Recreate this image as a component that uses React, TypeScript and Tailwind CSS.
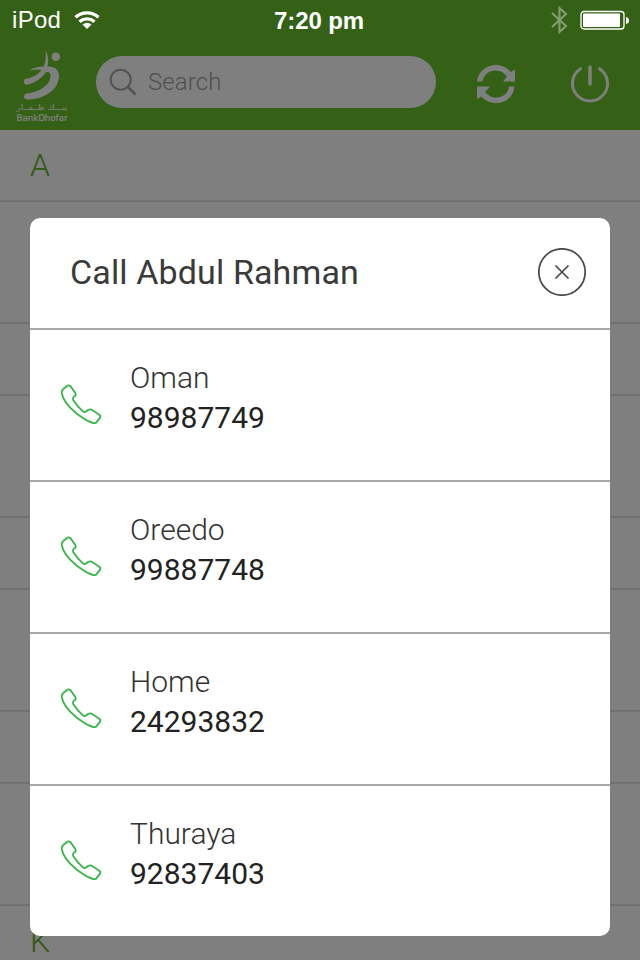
const sections = [{ letter: "A" }, { letter: "B" }, { letter: "F" }, { letter: "H" }, { letter: "K" }];

const numbers = [
  { label: "Oman", phone: "98987749" },
  { label: "Oreedo", phone: "99887748" },
  { label: "Home", phone: "24293832" },
  { label: "Thuraya", phone: "92837403" },
];

function BankLogo() {
  return (
    <svg className="h-[80px] w-[60px]" viewBox="0 0 60 80" fill="#fff">
      <circle cx="43.8" cy="12.8" r="4.2" />
      <path d="M33.5 6C36 11 37 17 35.500 22.500C42.500 22 47 26 47 32C47 43 37 54 17 55.500C10.500 56 11 50 15 49.500C27 48 37.500 42 38.500 33C39 29 37 27.500 34 28C29.500 35 22 39.500 14 41C11.500 39.500 11.500 36.500 13 35C21 34 26.500 30 29.500 26C26 25 22 25.500 17.500 26.500C21 23.500 27 22.500 31.800 22.500C34 17 34 11 33.5 6Z" />
      <text
        x="4.500"
        y="66"
        textLength="51"
        lengthAdjust="spacingAndGlyphs"
        fontSize="8"
        fontFamily="DejaVu Sans, sans-serif"
      >
        بنـــك ظــفــار
      </text>
      <text
        x="4.500"
        y="76.500"
        textLength="51"
        lengthAdjust="spacingAndGlyphs"
        fontSize="8.500"
        fontFamily="DejaVu Sans, sans-serif"
        stroke="#fff"
        strokeWidth="0.2"
      >
        BankDhofar
      </text>
    </svg>
  );
}

function SearchIcon() {
  return (
    <svg className="size-[28px] shrink-0" viewBox="0 0 28 28" fill="none" stroke="#a6a6a6">
      <circle cx="11.700" cy="11.700" r="10" strokeWidth="2" />
      <path d="M19 19L26.500 26.500" strokeWidth="2.600" />
    </svg>
  );
}

function RefreshIcon() {
  return (
    <svg className="size-[40px]" viewBox="0 0 40 40" fill="#fff">
      <path d="M1 17.500C2 8 10 1 20 1C26 1 31 3.500 34.500 8L39 5.500V17.500H27L31 12.500C28 8.500 24.500 6.500 20 6.500C13 6.500 7.500 11 6.500 17.500Z" />
      <path d="M38.500 22.500C38 32 30 39 20 39C14 39 9 36.500 5.500 32.500L1 35V22.500H14L9 28C12 31.500 15.500 33.500 20 33.500C27 33.500 32.500 29 33 22.500Z" />
    </svg>
  );
}

function PowerIcon() {
  return (
    <svg className="size-[40px]" viewBox="0 0 40 40" fill="none" stroke="#fff" strokeLinecap="round">
      <path d="M10.500 4.700A17.500 17.500 0 1 0 29.500 4.700" strokeWidth="3" />
      <path d="M20 3V20" strokeWidth="3.500" />
    </svg>
  );
}

function PhoneIcon() {
  return (
    <svg
      className="size-[60px] shrink-0"
      viewBox="0 0 180 180"
      fill="none"
      stroke="#39b54a"
      strokeWidth="5.500"
      strokeLinejoin="round"
    >
      <path d="M35 54Q34 47 39 43L51 33Q57 29 61 33L76 54Q79 59 75 63L70 67Q67 70 70 76Q82 95 99 109Q103 113 107 110L114 105Q119 102 125 104L148 119Q153 122 150 128L141 140Q138 145 130 144Q110 139 77 113Q41 84 35 54Z" />
    </svg>
  );
}

function StatusBar() {
  return (
    <div className="absolute inset-x-0 top-0 flex h-10 items-center justify-between pl-[12px] pr-[11px] font-['Liberation_Sans',sans-serif] text-white">
      <div className="flex items-center gap-[12px]">
        <span className="w-[50px] text-[24px] leading-[42px] tracking-[0.300px]">iPod</span>
        <svg className="h-[18px] w-[26px]" viewBox="0 0 26 18" fill="none" stroke="#fff" strokeWidth="3.400">
          <path d="M1.500 6.200C8 0.400 18 0.400 24.500 6.200" />
          <path d="M5.500 10.700C10 6.900 16 6.900 20.500 10.700" />
          <path d="M8.500 13.500Q13 10 17.500 13.500L13 18Z" fill="#fff" stroke="none" />
        </svg>
      </div>
      <span className="absolute left-[274px] top-0 text-[24px] font-bold leading-[41px] tracking-[-0.100px] whitespace-nowrap">
        7:20 pm
      </span>
      <div className="flex items-center gap-[12px]">
        <svg className="h-[28px] w-[17px]" viewBox="0 0 17 28" fill="none" stroke="#86a075" strokeWidth="2">
          <path d="M1 7L15 20L8.500 26V2L15 8L1 21" />
        </svg>
        <svg className="h-[20px] w-[49px]" viewBox="0 0 49 20">
          <rect x="1" y="1.500" width="43" height="17.500" rx="3" fill="none" stroke="#fff" strokeWidth="1.300" />
          <rect x="3" y="3.500" width="37" height="13.500" rx="1" fill="#fff" />
          <path d="M46 7Q49 7.500 49 10.500Q49 13.500 46 14Z" fill="#fff" />
        </svg>
      </div>
    </div>
  );
}

export default function App() {
  return (
    <div className="relative h-[960px] w-[640px] overflow-hidden bg-white font-[Roboto,sans-serif]">
      <header className="flex h-[130px] items-start bg-[#69c32d] pt-[44px]">
        <div className="ml-[12px] w-[60px]">
          <BankLogo />
        </div>
        <div className="mt-[12px] ml-[24px] flex h-[52px] w-[340px] items-center gap-[11px] rounded-full bg-white pl-[13px]">
          <SearchIcon />
          <span className="text-[24px] font-light leading-[52px] tracking-[0.100px] text-[#a0a0a0]">
            Search
          </span>
        </div>
        <div className="mt-[20px] ml-[40px] flex gap-[54px]">
          <RefreshIcon />
          <PowerIcon />
        </div>
      </header>

      {sections.map((section) => (
        <div key={section.letter}>
          <div className="h-[72px] border-b-2 border-[#e0e0e0] pl-[30px] text-[32px] font-light leading-[70px] text-[#5fb527]">
            {section.letter}
          </div>
          <div className="h-[122px] border-b-2 border-[#e0e0e0]" />
        </div>
      ))}

      {/* Dimmed backdrop with the call dialog */}
      <div className="absolute inset-0 bg-black/50 px-[30px] pt-[218px]">
        <div className="h-[718px] overflow-hidden rounded-[10px] bg-white">
          <div className="flex h-[112px] items-center justify-between border-b-2 border-[#a8a8a8] pr-[24px] pl-[40px]">
            <h1 className="mb-[2px] text-[34px] font-normal leading-[40px] tracking-[0.130px] text-[#3a3a3a]">
              Call Abdul Rahman
            </h1>
            <button className="mb-[2px] size-[48px]">
              <svg className="size-[48px]" viewBox="0 0 48 48" fill="none" stroke="#4a4a4a" strokeWidth="1.700">
                <circle cx="24" cy="24" r="23.200" />
                <path d="M17.500 17.500L30.500 30.500M30.500 17.500L17.500 30.500" />
              </svg>
            </button>
          </div>

          {numbers.map((item) => (
            <div
              key={item.phone}
              className="flex h-[152px] items-start border-b-2 border-[#a8a8a8] pl-[20px] last:border-b-0"
            >
              <div className="mt-[45px] mr-[20px]">
                <PhoneIcon />
              </div>
              <div className="pt-[28px] text-[30px] leading-[40px]">
                <p className="font-light text-[#333]">{item.label}</p>
                <p className="font-normal text-[#222]">{item.phone}</p>
              </div>
            </div>
          ))}
        </div>
      </div>

      <StatusBar />
    </div>
  );
}
